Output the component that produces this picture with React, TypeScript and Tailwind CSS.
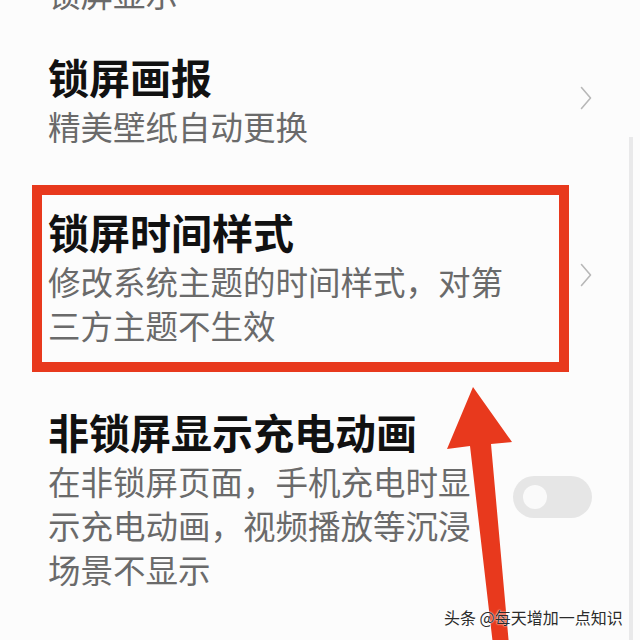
import React from "react";

const font = { fontFamily: '"Noto Sans CJK SC", "Noto Sans", sans-serif' };

function Chevron() {
  return (
    <svg width="12" height="24" viewBox="0 0 12 24" className="shrink-0">
      <polyline points="1.5,1.5 10.5,12 1.5,22.5" fill="none" stroke="#b8b8b8" strokeWidth="1.6" strokeLinejoin="round" strokeLinecap="round" />
    </svg>
  );
}

function Toggle() {
  return (
    <div className="shrink-0 w-[79px] h-[42px] rounded-full bg-[#e6e6e6] flex items-center pl-[10px]">
      <div className="w-[24px] h-[24px] rounded-full bg-[#fafafa]" />
    </div>
  );
}

export default function App() {
  return (
    <div className="relative w-[640px] h-[640px] overflow-hidden bg-[#fcfcfc]" style={font}>
      <div className="flex flex-col pl-[48px] pr-[48px]">
        {/* previous item, cut off */}
        <p className="-mt-[29px] text-[32.5px] leading-[44px] text-[#6a6a6a]">锁屏显示</p>

        {/* 锁屏画报 */}
        <div className="mt-[6px] flex items-center py-[27px]">
          <div className="flex-1">
            <h2 className="text-[41px] leading-[56px] font-bold text-[#111]">锁屏画报</h2>
            <p className="text-[32.5px] leading-[44px] text-[#6a6a6a]">精美壁纸自动更换</p>
          </div>
          <Chevron />
        </div>

        {/* 锁屏时间样式 */}
        <div className="flex items-center py-[28px]">
          <div className="w-[470px]">
            <h2 className="text-[41px] leading-[56px] font-bold text-[#111]">锁屏时间样式</h2>
            <p className="text-[32.5px] leading-[44px] text-[#6a6a6a]">修改系统主题的时间样式，对第三方主题不生效</p>
          </div>
          <div className="ml-auto">
            <Chevron />
          </div>
        </div>

        {/* 非锁屏显示充电动画 */}
        <div className="flex items-center py-[28px]">
          <div className="w-[440px]">
            <h2 className="text-[41px] leading-[56px] font-bold text-[#111]">非锁屏显示充电动画</h2>
            <p className="text-[32.5px] leading-[44px] text-[#6a6a6a]">在非锁屏页面，手机充电时显示充电动画，视频播放等沉浸场景不显示</p>
          </div>
          <div className="ml-auto">
            <Toggle />
          </div>
        </div>
      </div>

      {/* scrollbar */}
      <div className="absolute left-[629px] top-[137px] bottom-0 w-[4px] bg-[#e9e9ea]" />

      {/* annotation box */}
      <div className="absolute left-[32px] top-[185px] w-[537px] h-[187px] border-[10px] border-[#e8391d]" />

      {/* annotation arrow */}
      <svg className="absolute inset-0" width="640" height="640" viewBox="0 0 640 640">
        <polygon points="473,387 512,442 491,444 509,645 493,645 470,446 447,449" fill="#e8391d" />
      </svg>

      {/* watermark */}
      <div className="absolute left-[444px] top-[606px] text-[16px] leading-[22px] text-[#2b2b2b] [text-shadow:0_0_2px_#fff,0_0_1px_#fff]">
        头条 @每天增加一点知识
      </div>
    </div>
  );
}
